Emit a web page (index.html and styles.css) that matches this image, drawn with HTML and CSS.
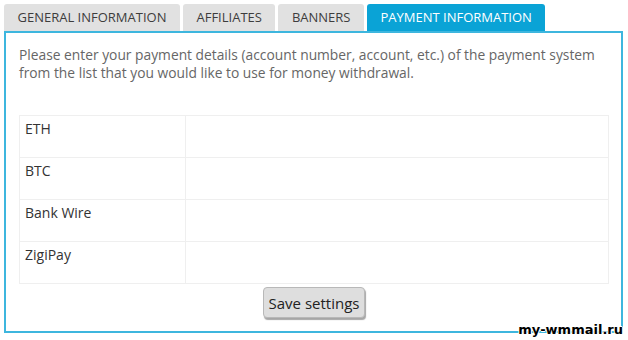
FILE: index.html
```
<!DOCTYPE html>
<html lang="en">
<head>
    <meta charset="UTF-8">
    <title>Payment information</title>
    <link rel="stylesheet" href="styles.css">
</head>
<body>
    <div class="page">
        <ul class="tabs">
            <li class="tab">General information</li>
            <li class="tab">Affiliates</li>
            <li class="tab">Banners</li>
            <li class="tab active">Payment information</li>
        </ul>

        <div class="panel">
            <p class="intro">Please enter your payment details (account number, account, etc.) of the payment system from the list that you would like to use for money withdrawal.</p>

            <table class="wallets">
                <tr><td class="name">ETH</td><td></td></tr>
                <tr><td class="name">BTC</td><td></td></tr>
                <tr><td class="name">Bank Wire</td><td></td></tr>
                <tr><td class="name">ZigiPay</td><td></td></tr>
            </table>

            <div class="actions">
                <button class="save">Save settings</button>
            </div>
        </div>

        <div class="watermark">my-wmmail.ru</div>
    </div>
</body>
</html>
```

FILE: styles.css
```
/* base */
* {
    margin: 0;
    padding: 0;
    box-sizing: border-box;
}

body {
    background: #fff;
    font-family: "Open Sans", Arial, sans-serif;
    color: #333;
}

.page {
    position: relative;
    width: 628px;
    height: 340px;
    padding: 4px 5px 0 4px;
}

/* tabs */
.tabs {
    list-style: none;
    display: flex;
    gap: 3px;
    height: 27px;
}

.tab {
    height: 27px;
    padding: 0 13.5px;
    background: #e1e1e1;
    border-radius: 3px 3px 0 0;
    font-size: 13px;
    line-height: 27px;
    text-transform: uppercase;
    color: #3d3d3d;
}

.tab.active {
    background: #0aa3d6;
    color: #fff;
}

/* panel */
.panel {
    border: 2px solid #3db6de;
    padding: 13px 12px 12px 13px;
    height: 302px;
}

.intro {
    font-size: 13.8px;
    line-height: 18px;
    color: #666;
}

.wallets {
    width: 100%;
    margin-top: 33px;
    border-collapse: collapse;
}

.wallets td {
    border: 1px solid #efefef;
    height: 42px;
    vertical-align: top;
    padding: 3px 5px;
    font-size: 14px;
    line-height: 20px;
    color: #333;
}

.wallets td.name {
    width: 166px;
}

.actions {
    display: flex;
    justify-content: center;
    margin-top: 3px;
}

.save {
    width: 102px;
    height: 31px;
    background: #dedede;
    border: 1px solid #b8b8b8;
    border-radius: 4px;
    box-shadow: 1px 2px 1px rgba(0, 0, 0, 0.35);
    font-family: "Open Sans", Arial, sans-serif;
    font-size: 15px;
    color: #222;
}

/* watermark over the corner */
.watermark {
    position: absolute;
    right: 5px;
    bottom: 3px;
    font-family: "DejaVu Sans", sans-serif;
    font-weight: bold;
    font-size: 13px;
    line-height: 15px;
    color: #000;
    text-shadow: 1px 0 0 #fff, -1px 0 0 #fff, 0 1px 0 #fff, 0 -1px 0 #fff;
}
```
